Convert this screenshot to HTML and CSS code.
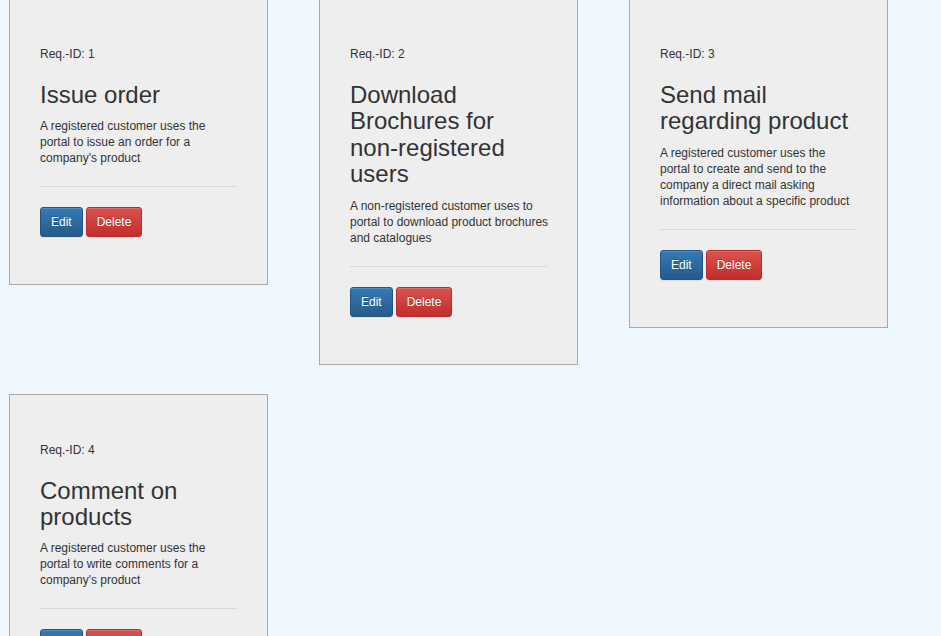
FILE: index.html
```html
<!DOCTYPE html>
<html lang="en">
<head>
<meta charset="utf-8">
<title>Requirements</title>
<link rel="stylesheet" href="styles.css">
</head>
<body>
<div class="board">
  <div class="card">
    <div class="req-id">Req.-ID: 1</div>
    <h3 class="title">Issue order</h3>
    <p class="desc">A registered customer uses the<br>portal to issue an order for a<br>company's product</p>
    <hr class="sep">
    <div class="actions"><button class="btn btn-primary">Edit</button> <button class="btn btn-danger">Delete</button></div>
  </div>
  <div class="card">
    <div class="req-id">Req.-ID: 2</div>
    <h3 class="title">Download Brochures for non-registered users</h3>
    <p class="desc">A non-registered customer uses to<br>portal to download product brochures<br>and catalogues</p>
    <hr class="sep">
    <div class="actions"><button class="btn btn-primary">Edit</button> <button class="btn btn-danger">Delete</button></div>
  </div>
  <div class="card">
    <div class="req-id">Req.-ID: 3</div>
    <h3 class="title">Send mail regarding product</h3>
    <p class="desc">A registered customer uses the<br>portal to create and send to the<br>company a direct mail asking<br>information about a specific product</p>
    <hr class="sep">
    <div class="actions"><button class="btn btn-primary">Edit</button> <button class="btn btn-danger">Delete</button></div>
  </div>
  <div class="card">
    <div class="req-id">Req.-ID: 4</div>
    <h3 class="title">Comment on products</h3>
    <p class="desc">A registered customer uses the<br>portal to write comments for a<br>company's product</p>
    <hr class="sep">
    <div class="actions"><button class="btn btn-primary">Edit</button> <button class="btn btn-danger">Delete</button></div>
  </div>
</div>
</body>
</html>
```

FILE: styles.css
```css
html, body {
  margin: 0;
  padding: 0;
}
body {
  background: #eff7ff;
  font-family: "Liberation Sans", Arial, Helvetica, sans-serif;
  color: #333;
  font-size: 12px;
  overflow: hidden;
}
.board {
  display: flex;
  flex-wrap: wrap;
  align-items: flex-start;
  column-gap: 51.5px;
  row-gap: 29px;
  margin-top: -2px;
  padding-left: 9px;
  width: 940px;
  box-sizing: border-box;
}
.card {
  box-sizing: border-box;
  width: 258.5px;
  background: #eeeeee;
  border: 1px solid #a9a9a9;
  padding: 47px 30px 47px;
}
.req-id {
  font-size: 12px;
  line-height: 16px;
}
.title {
  font-size: 24px;
  font-weight: 500;
  line-height: 1.1;
  margin: 20px 0 10px;
  color: #333;
}
.desc {
  font-size: 12px;
  line-height: 16px;
  margin: 0 -20px 0 0;
  white-space: nowrap;
}
.sep {
  border: 0;
  border-top: 1px solid #d8d8d8;
  margin: 20px 0;
  height: 0;
}
.actions {
  font-size: 0;
  display: flex;
  gap: 3px;
}
.btn {
  font-family: "Liberation Sans", Arial, Helvetica, sans-serif;
  font-size: 12px;
  line-height: 18px;
  padding: 5px 10px;
  border-radius: 3px;
  border: 1px solid transparent;
  color: #fff;
  text-shadow: 0 -1px 0 rgba(0, 0, 0, 0.2);
  box-shadow: inset 0 1px 0 rgba(255, 255, 255, 0.15), 0 1px 1px rgba(0, 0, 0, 0.075);
  cursor: pointer;
}
.btn-primary {
  background: linear-gradient(to bottom, #337ab7 0%, #265a88 100%);
  border-color: #245580;
}
.btn-danger {
  background: linear-gradient(to bottom, #d9534f 0%, #c12e2a 100%);
  border-color: #b92c28;
}
```
